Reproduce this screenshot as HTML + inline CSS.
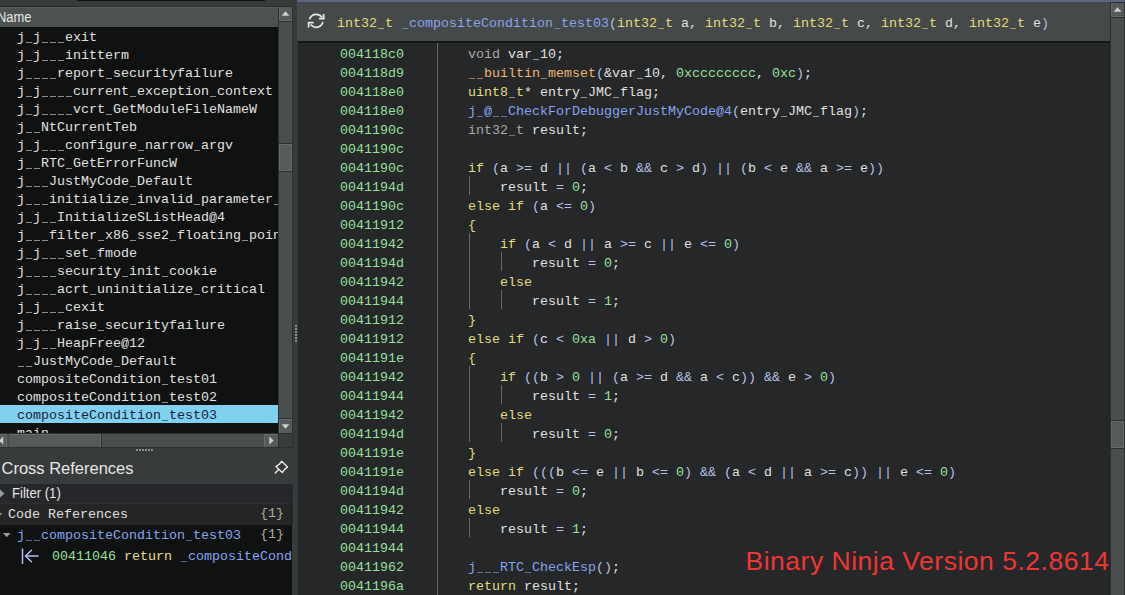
<!DOCTYPE html>
<html><head><meta charset="utf-8">
<style>
*{margin:0;padding:0;box-sizing:border-box}
html,body{width:1125px;height:595px;overflow:hidden;background:#383b3b;font-family:"Liberation Sans",sans-serif}
.abs{position:absolute}
.mono{font-family:"Liberation Mono",monospace;font-size:13.333px}
/* left */
#hdr{left:0;top:7px;width:278px;height:20px;background:#4f5252;border-top:1px solid #5a5d5d}
#hdr span{position:absolute;left:-3px;top:-0.5px;font-size:14.7px;color:#e6e6e6;line-height:18px;transform:scaleX(0.88);transform-origin:0 0}
#list{left:0;top:27px;width:278px;height:406px;background:#101212;overflow:hidden}
.it{position:absolute;left:0;width:278px;height:18px;padding-left:17px;padding-top:2px;line-height:18px;color:#e0e0e0;white-space:pre;font-family:"Liberation Mono",monospace;font-size:13.333px}
.sel{background:#80d0f0;color:#1c1c3a}
.tr{background:#4a4e4e}
.bt{background:#565a5a}
/* xref */
#xtitle{left:1.5px;top:459px;font-size:16.5px;color:#e6e6e6;line-height:18px}
#filter{left:0;top:484px;width:293px;height:19px;background:#25272a}
#coderef{left:0;top:503px;width:293px;height:22px;background:#232527;border-top:1px solid #2c2e30}
#xlist{left:0;top:525px;width:292px;height:70px;background:#101212;overflow:hidden}
/* right */
#rtop{left:297px;top:0;width:828px;height:2px;background:#5c6580}
#rhdr{left:297px;top:2px;width:813px;height:39px;background:#464949}
#rline{left:298px;top:41px;width:812px;height:2px;background:#151616}
#code{left:298px;top:43px;width:812px;height:552px;background:#252728;overflow:hidden}
#sep{left:437px;top:43px;width:1px;height:552px;background:#6a6a6a}
#rsb{left:1110px;top:2px;width:15px;height:593px;background:#4b4e4e;border-left:1px solid #2e3030}
.ln{position:absolute;left:0;height:19px;margin-top:2px;width:813px;line-height:19px;white-space:pre;font-family:"Liberation Mono",monospace;font-size:13.333px;color:#e0e0e0}
.ln .a{position:absolute;left:42px;color:#96e09c}
.ln .c{position:absolute}
.u{display:inline-block;clip-path:inset(0 1px);position:relative;top:0}
.g{position:absolute;width:1px;background:#6a6a6a}
.k{color:#e4dc7c}
.t{color:#a8a8a8}
.y{color:#e4dc7c}
.o{color:#edb474}
.f{color:#86a4f0}
.p{color:#b4c0e8}
.n{color:#96e09c}
#wm{left:745.5px;top:544px;font-size:26.5px;letter-spacing:0.51px;color:#f03535;line-height:34px;white-space:pre}
</style></head><body>
<!-- left panel -->
<div class="abs" style="left:77px;top:0;width:188px;height:1px;background:#121414"></div>
<div class="abs" style="left:0;top:6px;width:278px;height:1px;background:#2a2d2d"></div>
<div id="hdr" class="abs"><span>Name</span></div>
<div id="list" class="abs">
<div class="it" style="top:0px">j<span class="u">_</span>j<span class="u">_</span><span class="u">_</span><span class="u">_</span>exit</div>
<div class="it" style="top:18px">j<span class="u">_</span>j<span class="u">_</span><span class="u">_</span><span class="u">_</span>initterm</div>
<div class="it" style="top:36px">j<span class="u">_</span><span class="u">_</span><span class="u">_</span><span class="u">_</span>report<span class="u">_</span>securityfailure</div>
<div class="it" style="top:54px">j<span class="u">_</span>j<span class="u">_</span><span class="u">_</span><span class="u">_</span><span class="u">_</span>current<span class="u">_</span>exception<span class="u">_</span>context</div>
<div class="it" style="top:72px">j<span class="u">_</span>j<span class="u">_</span><span class="u">_</span><span class="u">_</span><span class="u">_</span>vcrt<span class="u">_</span>GetModuleFileNameW</div>
<div class="it" style="top:90px">j<span class="u">_</span><span class="u">_</span>NtCurrentTeb</div>
<div class="it" style="top:108px">j<span class="u">_</span>j<span class="u">_</span><span class="u">_</span><span class="u">_</span>configure<span class="u">_</span>narrow<span class="u">_</span>argv</div>
<div class="it" style="top:126px">j<span class="u">_</span><span class="u">_</span>RTC<span class="u">_</span>GetErrorFuncW</div>
<div class="it" style="top:144px">j<span class="u">_</span><span class="u">_</span><span class="u">_</span>JustMyCode<span class="u">_</span>Default</div>
<div class="it" style="top:162px">j<span class="u">_</span><span class="u">_</span><span class="u">_</span>initialize<span class="u">_</span>invalid<span class="u">_</span>parameter<span class="u">_</span>handler</div>
<div class="it" style="top:180px">j<span class="u">_</span>j<span class="u">_</span><span class="u">_</span>InitializeSListHead@4</div>
<div class="it" style="top:198px">j<span class="u">_</span><span class="u">_</span><span class="u">_</span>filter<span class="u">_</span>x86<span class="u">_</span>sse2<span class="u">_</span>floating<span class="u">_</span>point<span class="u">_</span>exception</div>
<div class="it" style="top:216px">j<span class="u">_</span>j<span class="u">_</span><span class="u">_</span><span class="u">_</span>set<span class="u">_</span>fmode</div>
<div class="it" style="top:234px">j<span class="u">_</span><span class="u">_</span><span class="u">_</span><span class="u">_</span>security<span class="u">_</span>init<span class="u">_</span>cookie</div>
<div class="it" style="top:252px">j<span class="u">_</span><span class="u">_</span><span class="u">_</span><span class="u">_</span>acrt<span class="u">_</span>uninitialize<span class="u">_</span>critical</div>
<div class="it" style="top:270px">j<span class="u">_</span>j<span class="u">_</span><span class="u">_</span><span class="u">_</span>cexit</div>
<div class="it" style="top:288px">j<span class="u">_</span><span class="u">_</span><span class="u">_</span><span class="u">_</span>raise<span class="u">_</span>securityfailure</div>
<div class="it" style="top:306px">j<span class="u">_</span>j<span class="u">_</span><span class="u">_</span>HeapFree@12</div>
<div class="it" style="top:324px"><span class="u">_</span><span class="u">_</span>JustMyCode<span class="u">_</span>Default</div>
<div class="it" style="top:342px">compositeCondition<span class="u">_</span>test01</div>
<div class="it" style="top:360px">compositeCondition<span class="u">_</span>test02</div>
<div class="it sel" style="top:378px">compositeCondition<span class="u">_</span>test03</div>
<div class="it" style="top:396px">main</div>
</div>
<div class="abs" style="left:278px;top:6px;width:15px;height:427px;background:#2c2f2f"></div>
<div class="abs tr" style="left:279px;top:7px;width:13px;height:426px"></div>
<div class="abs bt" style="left:279px;top:7px;width:13px;height:14px;box-shadow:inset 1px 0 #666a6a,inset 0 -1px #666a6a"></div>
<div class="abs" style="left:279px;top:21px;width:13px;height:1px;background:#2c2f2f"></div>
<svg class="abs" style="left:281px;top:11px" width="9" height="5"><path d="M0.6 4.7 L4.5 0.3 L8.4 4.7Z" fill="#cfcfcf"/></svg>
<div class="abs" style="left:279px;top:143px;width:13px;height:29px;background:#2c2f2f"></div><div class="abs bt" style="left:279px;top:144px;width:13px;height:27px;box-shadow:inset 0 0 0 1px #666a6a"></div>
<div class="abs" style="left:279px;top:418px;width:13px;height:1px;background:#2c2f2f"></div>
<div class="abs bt" style="left:279px;top:419px;width:13px;height:14px;box-shadow:inset 1px 0 #666a6a,inset 0 1px #666a6a"></div>
<svg class="abs" style="left:281px;top:424px" width="9" height="5"><path d="M0.6 0.3 L4.5 4.7 L8.4 0.3Z" fill="#cfcfcf"/></svg>
<div class="abs" style="left:0;top:433px;width:278px;height:15px;background:#2c2f2f"></div>
<div class="abs tr" style="left:0;top:434px;width:278px;height:13px"></div>
<div class="abs bt" style="left:0;top:434px;width:7px;height:13px;box-shadow:inset -1px 0 #666a6a,inset 0 1px #666a6a"></div>
<svg class="abs" style="left:0;top:436px" width="4" height="9"><path d="M3.2 0.6 L-0.8 4.5 L3.2 8.4Z" fill="#cfcfcf"/></svg>
<div class="abs bt" style="left:10px;top:434px;width:91px;height:13px;box-shadow:inset -1px 0 #666a6a,inset 0 1px #666a6a"></div>
<div class="abs" style="left:101px;top:434px;width:1px;height:13px;background:#2c2f2f"></div>
<div class="abs bt" style="left:264px;top:434px;width:14px;height:13px;box-shadow:inset 1px 0 #666a6a,inset 0 1px #666a6a"></div>
<svg class="abs" style="left:269px;top:436px" width="5" height="9"><path d="M0.3 0.6 L4.7 4.5 L0.3 8.4Z" fill="#cfcfcf"/></svg>
<div class="abs" style="left:278px;top:433px;width:15px;height:15px;background:#2c2f2f"></div>
<div class="abs" style="left:279px;top:434px;width:13px;height:13px;background:#3a3d3d"></div>
<div class="abs" style="left:136px;top:449px;width:18px;height:2px;background:repeating-linear-gradient(90deg,#8c8e8e 0 2px,transparent 2px 3px)"></div>
<div class="abs" style="left:295px;top:325px;width:2px;height:18px;background:repeating-linear-gradient(180deg,#8c8e8e 0 2px,transparent 2px 3px)"></div>
<div id="xtitle" class="abs">Cross References</div>
<svg class="abs" style="left:266px;top:454px" width="30" height="26" viewBox="0 0 30 26"><g fill="none" stroke="#ebe9e5" stroke-width="1.35" stroke-linejoin="round" stroke-linecap="round"><path d="M15.7 7.3 L21.5 13.1 L18.6 15.4 L16.3 18.6 L9.9 12.6 L13.3 10.2 Z"/><path d="M12.6 15.5 L9.3 19.0"/></g></svg>
<div id="filter" class="abs"><svg class="abs" style="left:0;top:5px" width="6" height="9"><path d="M0 0.5 L4.5 4.5 L0 8.5Z" fill="#9a9a9a"/></svg><span class="abs" style="left:12px;top:1px;font-size:14.4px;line-height:17px;color:#e6e6e6;transform:scaleX(0.91);transform-origin:0 0;white-space:pre">Filter (1)</span></div>
<div id="coderef" class="abs"><svg class="abs" style="left:0;top:9px" width="6" height="6"><path d="M-3 0 L2.5 0 L-0.25 2.8Z" fill="#9a9a9a"/></svg><div class="ln" style="left:8px;top:0;margin-top:1px">Code References</div><div class="ln" style="left:260px;top:0;margin-top:0;color:#b4ac98">{1}</div></div>
<div id="xlist" class="abs">
 <svg class="abs" style="left:2.5px;top:8px" width="8" height="6"><path d="M0 0 L7.5 0 L3.75 4.2Z" fill="#9a9a9a"/></svg>
 <div class="ln" style="left:17px;top:0;margin-top:1px"><span class="f">j<span class="u">_</span><span class="u">_</span>compositeCondition<span class="u">_</span>test03</span></div>
 <div class="ln" style="left:260px;top:0;margin-top:0;color:#b4ac98">{1}</div>
 <svg class="abs" style="left:21px;top:23px" width="18" height="16" viewBox="0 0 18 16"><g fill="none" stroke="#b4bcf6" stroke-width="1.5" stroke-linecap="round"><path d="M1.5 1 V15.5"/><path d="M17 8 H5"/><path d="M10.5 2.3 L4.6 8 L10.5 13.7"/></g></svg>
 <div class="ln" style="left:52px;top:21px;margin-top:1px"><span class="n">00411046</span> <span class="y">return</span> <span class="f"><span class="u">_</span>compositeCondition<span class="u">_</span>test03</span></div>
</div>
<!-- right panel -->
<div id="rtop" class="abs"></div>
<div id="rhdr" class="abs">
 <svg class="abs" style="left:7px;top:7px" width="24" height="24" viewBox="0 0 24 24"><g fill="none" stroke="#e8e6e2" stroke-width="1.7" stroke-linejoin="miter"><path d="M5.6 10.2 A7 7 0 0 1 18.2 8.6"/><path d="M19.6 5.0 L19.8 9.7 L15.0 9.7"/><path d="M18.9 13.0 A7 7 0 0 1 6.6 15.6"/><path d="M9.6 13.7 L4.6 13.7 L4.6 18.6"/></g></svg>
 <div class="ln" style="left:40px;top:11.5px;margin-top:0"><span class="y">int32<span class="u">_</span>t</span> <span class="f"><span class="u">_</span>compositeCondition<span class="u">_</span>test03</span><span class="p">(</span><span class="y">int32<span class="u">_</span>t</span> a, <span class="y">int32<span class="u">_</span>t</span> b, <span class="y">int32<span class="u">_</span>t</span> c, <span class="y">int32<span class="u">_</span>t</span> d, <span class="y">int32<span class="u">_</span>t</span> e<span class="p">)</span></div>
</div>
<div id="rline" class="abs"></div>
<div id="code" class="abs">
<div class="ln" style="top:0px"><span class="a">004118c0</span><span class="c" style="left:170px"><span class="t">void</span> var<span class="u">_</span>10;</span></div>
<div class="ln" style="top:19px"><span class="a">004118d9</span><span class="c" style="left:170px"><span class="o"><span class="u">_</span><span class="u">_</span>builtin<span class="u">_</span>memset</span><span class="p">(</span>&amp;var<span class="u">_</span>10, <span class="n">0xcccccccc</span>, <span class="n">0xc</span><span class="p">)</span>;</span></div>
<div class="ln" style="top:38px"><span class="a">004118e0</span><span class="c" style="left:170px"><span class="y">uint8<span class="u">_</span>t</span>* entry<span class="u">_</span>JMC<span class="u">_</span>flag;</span></div>
<div class="ln" style="top:57px"><span class="a">004118e0</span><span class="c" style="left:170px"><span class="f">j<span class="u">_</span>@<span class="u">_</span><span class="u">_</span>CheckForDebuggerJustMyCode@4</span><span class="p">(</span>entry<span class="u">_</span>JMC<span class="u">_</span>flag<span class="p">)</span>;</span></div>
<div class="ln" style="top:76px"><span class="a">0041190c</span><span class="c" style="left:170px"><span class="t">int32<span class="u">_</span>t</span> result;</span></div>
<div class="ln" style="top:95px"><span class="a">0041190c</span><span class="c" style="left:170px"></span></div>
<div class="ln" style="top:114px"><span class="a">0041190c</span><span class="c" style="left:170px"><span class="k">if</span> <span class="p">(</span>a <span class="p">&gt;=</span> d <span class="p">||</span> <span class="p">(</span>a <span class="p">&lt;</span> b <span class="p">&amp;&amp;</span> c <span class="p">&gt;</span> d<span class="p">)</span> <span class="p">||</span> <span class="p">(</span>b <span class="p">&lt;</span> e <span class="p">&amp;&amp;</span> a <span class="p">&gt;=</span> e<span class="p">))</span></span></div>
<div class="ln" style="top:133px"><span class="a">0041194d</span><span class="c" style="left:202px">result <span class="p">=</span> <span class="n">0</span>;</span></div>
<div class="ln" style="top:152px"><span class="a">0041190c</span><span class="c" style="left:170px"><span class="k">else if</span> <span class="p">(</span>a <span class="p">&lt;=</span> <span class="n">0</span><span class="p">)</span></span></div>
<div class="ln" style="top:171px"><span class="a">00411912</span><span class="c" style="left:170px"><span class="k">{</span></span></div>
<div class="ln" style="top:190px"><span class="a">00411942</span><span class="c" style="left:202px"><span class="k">if</span> <span class="p">(</span>a <span class="p">&lt;</span> d <span class="p">||</span> a <span class="p">&gt;=</span> c <span class="p">||</span> e <span class="p">&lt;=</span> <span class="n">0</span><span class="p">)</span></span></div>
<div class="ln" style="top:209px"><span class="a">0041194d</span><span class="c" style="left:234px">result <span class="p">=</span> <span class="n">0</span>;</span></div>
<div class="ln" style="top:228px"><span class="a">00411942</span><span class="c" style="left:202px"><span class="k">else</span></span></div>
<div class="ln" style="top:247px"><span class="a">00411944</span><span class="c" style="left:234px">result <span class="p">=</span> <span class="n">1</span>;</span></div>
<div class="ln" style="top:266px"><span class="a">00411912</span><span class="c" style="left:170px"><span class="k">}</span></span></div>
<div class="ln" style="top:285px"><span class="a">00411912</span><span class="c" style="left:170px"><span class="k">else if</span> <span class="p">(</span>c <span class="p">&lt;</span> <span class="n">0xa</span> <span class="p">||</span> d <span class="p">&gt;</span> <span class="n">0</span><span class="p">)</span></span></div>
<div class="ln" style="top:304px"><span class="a">0041191e</span><span class="c" style="left:170px"><span class="k">{</span></span></div>
<div class="ln" style="top:323px"><span class="a">00411942</span><span class="c" style="left:202px"><span class="k">if</span> <span class="p">((</span>b <span class="p">&gt;</span> <span class="n">0</span> <span class="p">||</span> <span class="p">(</span>a <span class="p">&gt;=</span> d <span class="p">&amp;&amp;</span> a <span class="p">&lt;</span> c<span class="p">))</span> <span class="p">&amp;&amp;</span> e <span class="p">&gt;</span> <span class="n">0</span><span class="p">)</span></span></div>
<div class="ln" style="top:342px"><span class="a">00411944</span><span class="c" style="left:234px">result <span class="p">=</span> <span class="n">1</span>;</span></div>
<div class="ln" style="top:361px"><span class="a">00411942</span><span class="c" style="left:202px"><span class="k">else</span></span></div>
<div class="ln" style="top:380px"><span class="a">0041194d</span><span class="c" style="left:234px">result <span class="p">=</span> <span class="n">0</span>;</span></div>
<div class="ln" style="top:399px"><span class="a">0041191e</span><span class="c" style="left:170px"><span class="k">}</span></span></div>
<div class="ln" style="top:418px"><span class="a">0041191e</span><span class="c" style="left:170px"><span class="k">else if</span> <span class="p">(((</span>b <span class="p">&lt;=</span> e <span class="p">||</span> b <span class="p">&lt;=</span> <span class="n">0</span><span class="p">)</span> <span class="p">&amp;&amp;</span> <span class="p">(</span>a <span class="p">&lt;</span> d <span class="p">||</span> a <span class="p">&gt;=</span> c<span class="p">))</span> <span class="p">||</span> e <span class="p">&lt;=</span> <span class="n">0</span><span class="p">)</span></span></div>
<div class="ln" style="top:437px"><span class="a">0041194d</span><span class="c" style="left:202px">result <span class="p">=</span> <span class="n">0</span>;</span></div>
<div class="ln" style="top:456px"><span class="a">00411942</span><span class="c" style="left:170px"><span class="k">else</span></span></div>
<div class="ln" style="top:475px"><span class="a">00411944</span><span class="c" style="left:202px">result <span class="p">=</span> <span class="n">1</span>;</span></div>
<div class="ln" style="top:494px"><span class="a">00411944</span><span class="c" style="left:170px"></span></div>
<div class="ln" style="top:513px"><span class="a">00411962</span><span class="c" style="left:170px"><span class="f">j<span class="u">_</span><span class="u">_</span><span class="u">_</span>RTC<span class="u">_</span>CheckEsp</span><span class="p">()</span>;</span></div>
<div class="ln" style="top:532px"><span class="a">0041196a</span><span class="c" style="left:170px"><span class="k">return</span> result;</span></div>
</div>
<div class="g" style="left:469px;top:176px;height:19px"></div>
<div class="g" style="left:469px;top:233px;height:76px"></div>
<div class="g" style="left:501px;top:252px;height:19px"></div>
<div class="g" style="left:501px;top:290px;height:19px"></div>
<div class="g" style="left:469px;top:366px;height:76px"></div>
<div class="g" style="left:501px;top:385px;height:19px"></div>
<div class="g" style="left:501px;top:423px;height:19px"></div>
<div class="g" style="left:469px;top:480px;height:19px"></div>
<div class="g" style="left:469px;top:518px;height:19px"></div>
<div id="sep" class="abs"></div>
<div class="abs" style="left:1110px;top:2px;width:15px;height:593px;background:#2c2f2f"></div>
<div class="abs tr" style="left:1111px;top:3px;width:13px;height:592px"></div>
<div class="abs bt" style="left:1111px;top:3px;width:13px;height:14px;box-shadow:inset 1px 0 #666a6a,inset 0 -1px #666a6a"></div>
<div class="abs" style="left:1111px;top:17px;width:13px;height:1px;background:#2c2f2f"></div>
<svg class="abs" style="left:1113px;top:7px" width="9" height="5"><path d="M0.6 4.7 L4.5 0.3 L8.4 4.7Z" fill="#cfcfcf"/></svg>
<div class="abs" style="left:1111px;top:420px;width:13px;height:29px;background:#2c2f2f"></div><div class="abs bt" style="left:1111px;top:421px;width:13px;height:27px;box-shadow:inset 0 0 0 1px #666a6a"></div>
<div id="wm" class="abs">Binary Ninja Version 5.2.8614</div>
</body></html>
